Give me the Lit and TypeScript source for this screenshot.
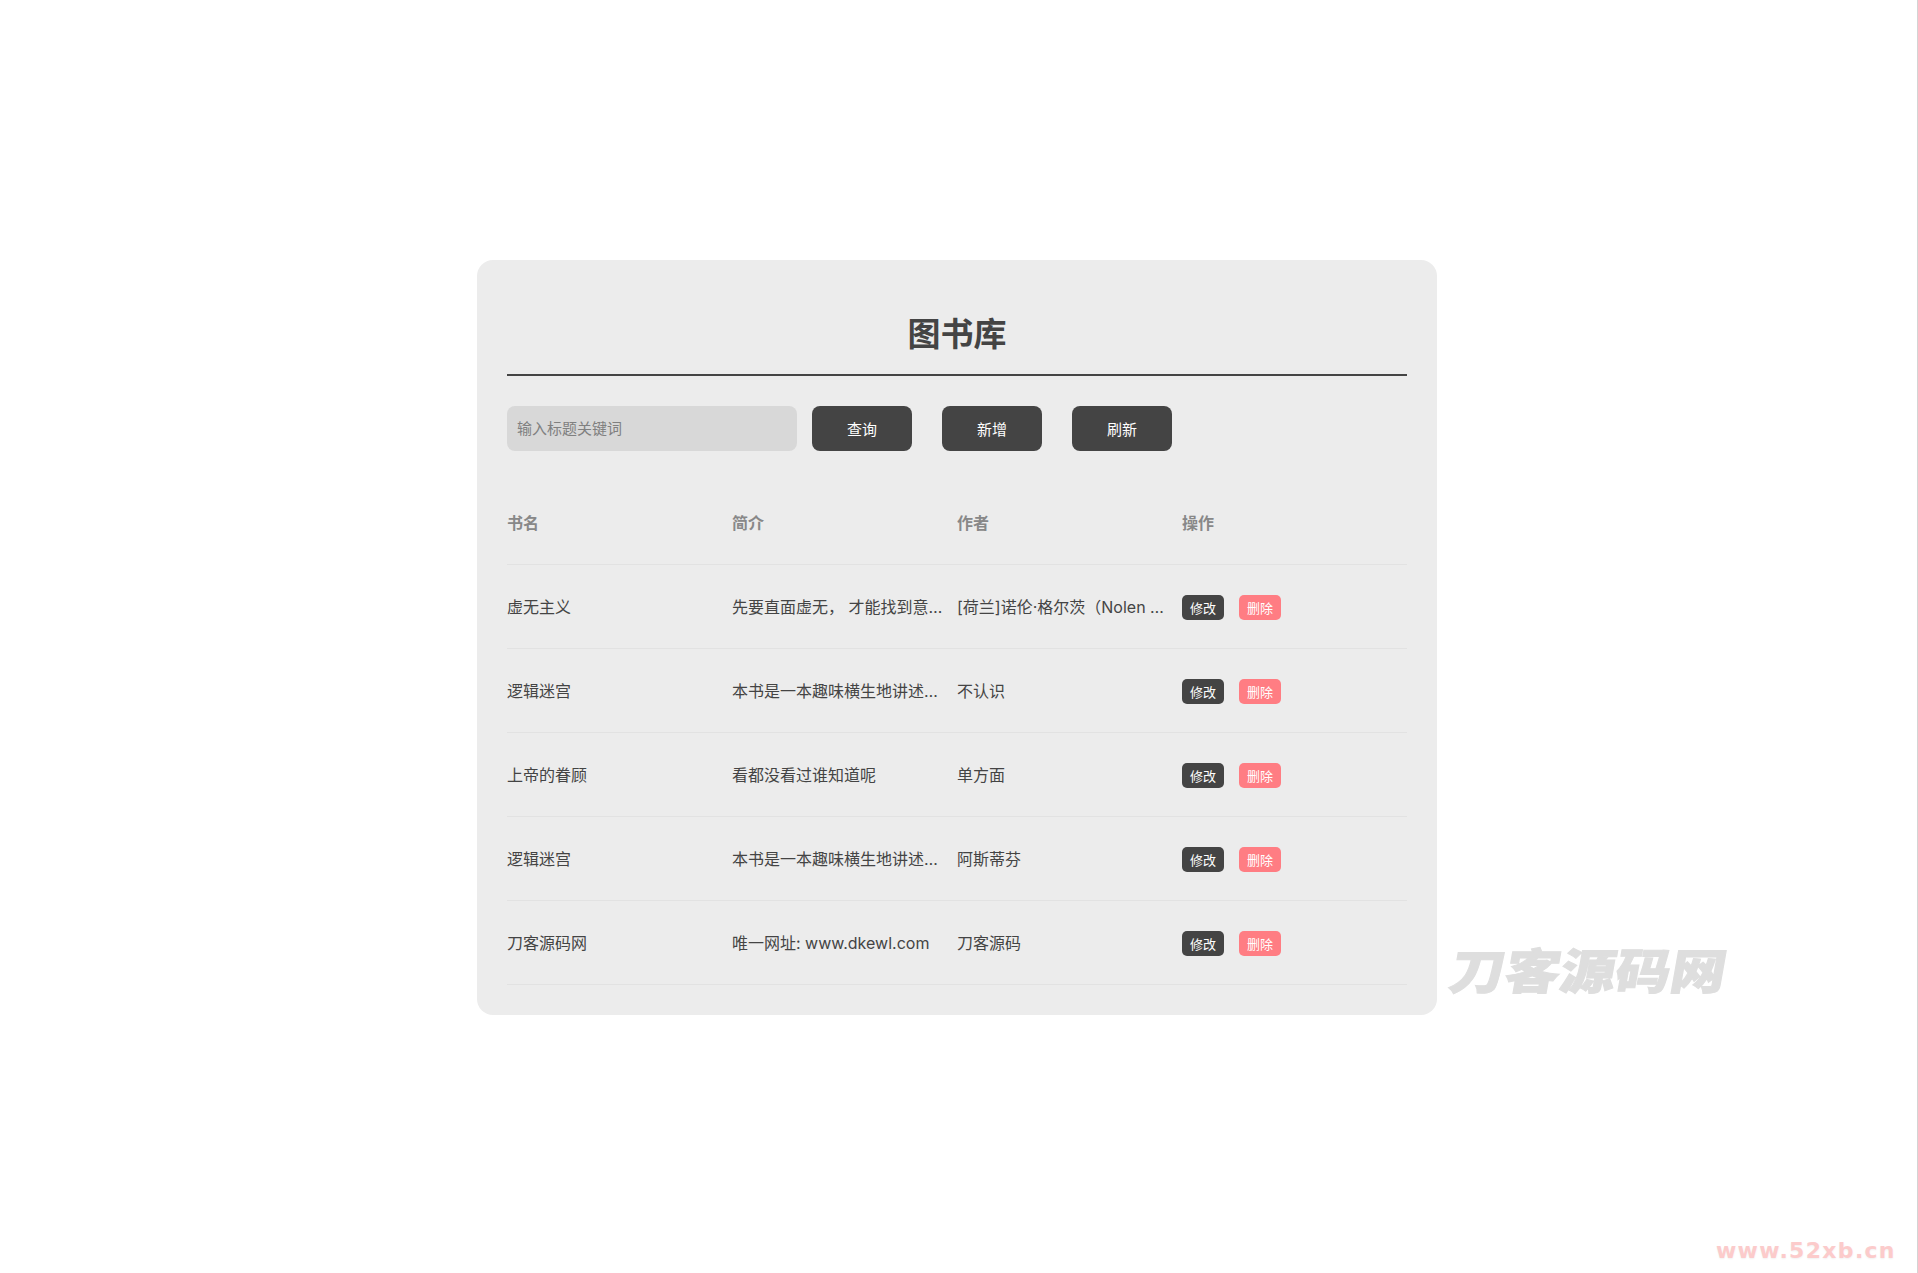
import { LitElement, html, css } from "lit";
import { customElement } from "lit/decorators.js";

const BOOKS = [
  ["虚无主义", "先要直面虚无， 才能找到意义，这是一本关于虚无主义的入门读物", "[荷兰]诺伦·格尔茨（Nolen Gertz）著"],
  ["逻辑迷宫", "本书是一本趣味横生地讲述逻辑学知识的通俗读物", "不认识"],
  ["上帝的眷顾", "看都没看过谁知道呢", "单方面"],
  ["逻辑迷宫", "本书是一本趣味横生地讲述逻辑学知识的通俗读物", "阿斯蒂芬"],
  ["刀客源码网", "唯一网址: www.dkewl.com", "刀客源码"],
];

@customElement("app-root")
export class AppRoot extends LitElement {
  static styles = css`
    :host {
      display: block;
      box-sizing: border-box;
      position: relative;
      height: 1273px;
      overflow: hidden;
      padding: 260px 3px 0 0;
      background: #fff;
      border-right: 1px solid #d4d4d4;
      color: #444;
      font-family: "Inter", "Noto Sans CJK SC", sans-serif;
      font-size: 16px;
    }
    .card {
      box-sizing: border-box;
      width: 960px;
      margin: 0 auto;
      padding: 30px;
      background: #ececec;
      border-radius: 16px;
    }
    h1 {
      margin: 0;
      height: 86px;
      box-sizing: border-box;
      padding-top: 19px;
      border-bottom: 2px solid #444;
      text-align: center;
      font-family: "Noto Sans CJK SC", sans-serif;
      font-size: 33px;
      line-height: 46px;
      font-weight: 700;
      color: #444;
    }
    .toolbar {
      display: flex;
      gap: 30px;
      margin-top: 30px;
      height: 45px;
    }
    input {
      box-sizing: border-box;
      width: 290px;
      height: 45px;
      margin-right: -15px;
      padding: 0 10px 2px;
      border: 0;
      border-radius: 8px;
      outline: 0;
      background: #d8d8d8;
      font-family: "Noto Sans CJK SC", sans-serif;
      font-size: 15px;
      color: #444;
    }
    input::placeholder { color: #808080; opacity: 1; }
    .btn {
      width: 100px;
      height: 45px;
      padding: 0;
      border: 0;
      border-radius: 8px;
      background: #444;
      color: #fff;
      font-family: "Noto Sans CJK SC", sans-serif;
      font-size: 15px;
    }
    table {
      width: 900px;
      margin-top: 30px;
      border-collapse: collapse;
      table-layout: fixed;
    }
    th, td {
      box-sizing: border-box;
      height: 84px;
      padding: 0 10px 1px 0;
      border-bottom: 1px solid #e2e2e2;
      text-align: left;
      white-space: nowrap;
      overflow: hidden;
      text-overflow: ellipsis;
      font-weight: 400;
    }
    th {
      height: 83px;
      color: #888;
      font-weight: 700;
      font-family: "Noto Sans CJK SC", sans-serif;
    }
    td.ops { padding: 2px 0 0; }
    .act {
      display: inline-block;
      box-sizing: border-box;
      width: 42px;
      height: 25px;
      margin-right: 15px;
      padding: 0;
      border: 0;
      border-radius: 5px;
      background: #444;
      color: #fff;
      font-family: "Noto Sans CJK SC", sans-serif;
      font-size: 13px;
      line-height: 25px;
      text-align: center;
      vertical-align: middle;
    }
    .act.del { background: #ff7d83; }
    .mark {
      position: absolute;
      left: 1451px;
      top: 934px;
      font-family: "Noto Sans CJK SC", sans-serif;
      font-size: 48px;
      line-height: 68px;
      font-weight: 900;
      color: #dedede;
      white-space: nowrap;
      -webkit-text-stroke: 1px #dedede;
      transform-origin: left center;
      transform: skewX(-10deg) scaleX(1.15);
    }
    .site {
      position: absolute;
      left: 1716px;
      top: 1238px;
      font-family: "DejaVu Sans", sans-serif;
      font-size: 22px;
      line-height: 26px;
      font-weight: 700;
      letter-spacing: 1.3px;
      color: #fccbcb;
      white-space: nowrap;
      text-shadow: 0 1px 2px rgba(0, 0, 0, 0.06);
    }
  `;

  render() {
    return html`
      <div class="card">
        <h1>图书库</h1>
        <div class="toolbar">
          <input placeholder="输入标题关键词" />
          <button class="btn">查询</button>
          <button class="btn">新增</button>
          <button class="btn">刷新</button>
        </div>
        <table>
          <thead>
            <tr><th>书名</th><th>简介</th><th>作者</th><th>操作</th></tr>
          </thead>
          <tbody>
            ${BOOKS.map(
              ([name, intro, author]) => html`
                <tr>
                  <td>${name}</td>
                  <td>${intro}</td>
                  <td>${author}</td>
                  <td class="ops"><button class="act">修改</button><button class="act del">删除</button></td>
                </tr>
              `
            )}
          </tbody>
        </table>
      </div>
      <div class="mark">刀客源码网</div>
      <div class="site">www.52xb.cn</div>
    `;
  }
}
